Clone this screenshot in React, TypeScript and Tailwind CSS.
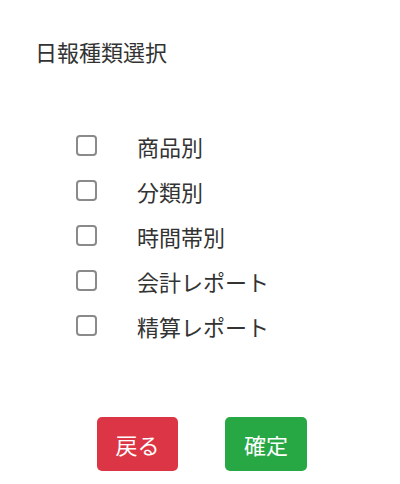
import React from "react";

const items = ["商品別", "分類別", "時間帯別", "会計レポート", "精算レポート"];

export default function App() {
  return (
    <div
      className="w-[400px] h-[484px] bg-white text-[#333333]"
      style={{ fontFamily: '"Noto Sans CJK JP", "Noto Sans", sans-serif' }}
    >
      <div className="pt-[36px] pl-[35px] text-[22px] leading-[30px]">日報種類選択</div>
      <div className="mt-[57px] pl-[76px] flex flex-col">
        {items.map((t) => (
          <label key={t} className="h-[45px] flex items-center">
            <span className="w-[21px] h-[21px] rounded-[4px] border-2 border-[#8a8a8a] bg-white shrink-0" />
            <span className="ml-[40px] text-[22px] leading-[30px]">{t}</span>
          </label>
        ))}
      </div>
      <div className="mt-[69px] flex justify-center gap-[47px] pl-[4px]">
        <button className="w-[81px] h-[54px] rounded-[5px] bg-[#dc3545] text-white text-[22px] leading-none">
          戻る
        </button>
        <button className="w-[82px] h-[54px] rounded-[5px] bg-[#28a745] text-white text-[22px] leading-none">
          確定
        </button>
      </div>
    </div>
  );
}
